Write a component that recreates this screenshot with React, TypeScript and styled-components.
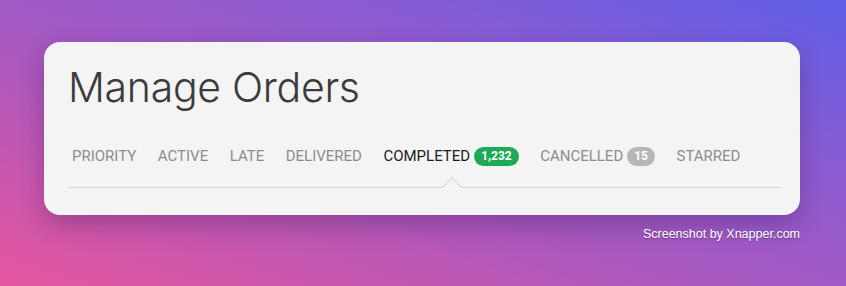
import React from 'react';
import styled, {createGlobalStyle} from "styled-components";

const GlobalStyle = createGlobalStyle`
  html, body {
    margin: 0;
    padding: 0;
  }
  body {
    font-family: Roboto, "Liberation Sans", sans-serif;
  }
`;

const Backdrop = styled.div`
  width: 846px;
  height: 286px;
  box-sizing: border-box;
  padding: 42px 46px 0 44px;
  background: linear-gradient(to top right, #e6569f 0%, #a958bf 42%, #8b5bd2 70%, #5f5fe8 100%);
  display: flex;
  flex-direction: column;
  align-items: stretch;
  overflow: hidden;
`;

const Card = styled.div`
  background: #f4f4f4;
  border-radius: 16px;
  height: 173px;
  box-sizing: border-box;
  padding: 20px 19px 0 24px;
  box-shadow: 0 10px 24px rgba(40, 10, 70, 0.28);
`;

const Title = styled.h1`
  margin: 0;
  font-family: Inter, "Liberation Sans", sans-serif;
  font-weight: 300;
  font-size: 41px;
  line-height: 50px;
  color: #3b3b3b;
  letter-spacing: -0.3px;
`;

const TabBar = styled.div`
  margin-top: 32px;
  display: flex;
  align-items: center;
  gap: 21.5px;
  padding: 0 4px 19px;
  border-bottom: 1px solid #d6d6d6;
`;

const Tab = styled.div<{ $active?: boolean }>`
  position: relative;
  display: flex;
  align-items: center;
  height: 24px;
  font-size: 15px;
  text-transform: uppercase;
  color: ${p => p.$active ? '#1c1c1c' : '#8c8c8c'};
`;

const Badge = styled.span<{ $tone: 'green' | 'gray' }>`
  margin-left: 4px;
  height: 19px;
  padding: 0 7px;
  box-sizing: border-box;
  border-radius: 10px;
  background: ${p => p.$tone === 'green' ? '#1ea955' : '#b7b7b7'};
  color: #fff;
  font-size: 12px;
  font-weight: 700;
  display: inline-flex;
  align-items: center;
  justify-content: center;
`;

const Caret = styled.span`
  position: absolute;
  left: 50%;
  bottom: -26px;
  width: 13px;
  height: 13px;
  margin-left: -6.5px;
  background: #f4f4f4;
  border-left: 1px solid #d6d6d6;
  border-top: 1px solid #d6d6d6;
  transform: rotate(45deg);
`;

const Credit = styled.div`
  align-self: flex-end;
  margin-top: 12px;
  font-family: "Liberation Sans", Arial, sans-serif;
  font-size: 12.5px;
  color: #fff;
  text-shadow: 0 1px 1px rgba(0, 0, 0, 0.35);
`;

type TabItem = { label: string; count?: string; tone?: 'green' | 'gray'; active?: boolean };

const tabs: TabItem[] = [
  {label: 'Priority'},
  {label: 'Active'},
  {label: 'Late'},
  {label: 'Delivered'},
  {label: 'Completed', count: '1,232', tone: 'green', active: true},
  {label: 'Cancelled', count: '15', tone: 'gray'},
  {label: 'Starred'},
];

const App = () => {
  return (
    <Backdrop>
      <GlobalStyle/>
      <Card>
        <Title>Manage Orders</Title>
        <TabBar>
          {tabs.map(t => (
            <Tab key={t.label} $active={t.active}>
              {t.label}
              {t.count && <Badge $tone={t.tone!}>{t.count}</Badge>}
              {t.active && <Caret/>}
            </Tab>
          ))}
        </TabBar>
      </Card>
      <Credit>Screenshot by Xnapper.com</Credit>
    </Backdrop>
  )
};

export default App;
